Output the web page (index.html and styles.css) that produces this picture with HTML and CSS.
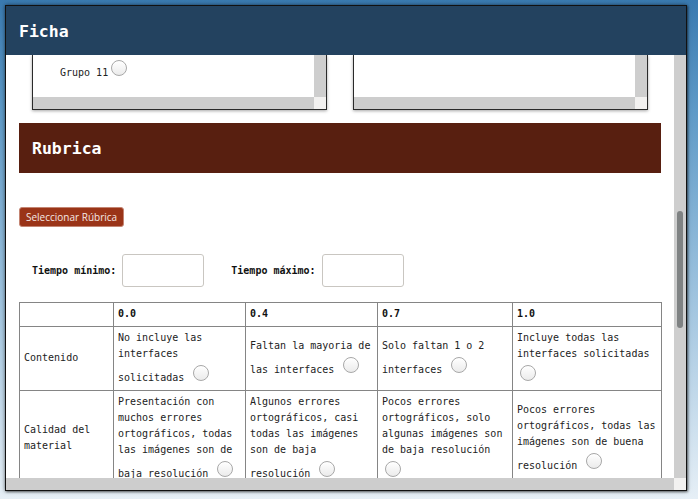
FILE: index.html
```html
<!DOCTYPE html>
<html lang="es">
<head>
<meta charset="utf-8">
<title>Ficha</title>
<link rel="stylesheet" href="styles.css">
</head>
<body>
<div class="window">
  <div class="titlebar"><h1 class="title">Ficha</h1></div>
  <div class="viewport">
    <div class="page">
      <div class="groups">
        <div class="listbox">
          <div class="listbox-body">
            <div class="listbox-content">
              <label class="group-item">Grupo 11<input type="radio" class="radio" name="grupo"></label>
            </div>
            <div class="vscroll-small"></div>
          </div>
          <div class="listbox-foot"><div class="hscroll-small"></div><div class="corner-small"></div></div>
        </div>
        <div class="listbox">
          <div class="listbox-body">
            <div class="listbox-content"></div>
            <div class="vscroll-small"></div>
          </div>
          <div class="listbox-foot"><div class="hscroll-small"></div><div class="corner-small"></div></div>
        </div>
      </div>

      <h2 class="section">Rubrica</h2>

      <button class="btn" type="button">Seleccionar Rúbrica</button>

      <div class="times">
        <label class="time-label">Tiempo mínimo:</label>
        <input class="time-input" type="text">
        <label class="time-label second">Tiempo máximo:</label>
        <input class="time-input" type="text">
      </div>

      <table class="rubric">
        <colgroup>
          <col class="c0"><col class="c1"><col class="c2"><col class="c3"><col class="c4">
        </colgroup>
        <thead>
          <tr><th></th><th>0.0</th><th>0.4</th><th>0.7</th><th>1.0</th></tr>
        </thead>
        <tbody>
          <tr>
            <td>Contenido</td>
            <td>No incluye las interfaces solicitadas <input type="radio" class="radio" name="c1"></td>
            <td>Faltan la mayoria de las interfaces <input type="radio" class="radio" name="c1"></td>
            <td>Solo faltan 1 o 2 interfaces <input type="radio" class="radio" name="c1"></td>
            <td>Incluye todas las interfaces solicitadas <input type="radio" class="radio" name="c1"></td>
          </tr>
          <tr>
            <td>Calidad del material</td>
            <td>Presentación con muchos errores ortográficos, todas las imágenes son de baja resolución <input type="radio" class="radio" name="c2"></td>
            <td>Algunos errores ortográficos, casi todas las imágenes son de baja resolución <input type="radio" class="radio" name="c2"></td>
            <td>Pocos errores ortográficos, solo algunas imágenes son de baja resolución <input type="radio" class="radio" name="c2"></td>
            <td>Pocos errores ortográficos, todas las imágenes son de buena resolución <input type="radio" class="radio" name="c2"></td>
          </tr>
        </tbody>
      </table>
    </div>
    <div class="vscroll"><div class="thumb"></div></div>
  </div>
  <div class="hbar"><div class="hscroll"></div><div class="corner"></div></div>
</div>
</body>
</html>
```

FILE: styles.css
```css
* { box-sizing: border-box; }

html, body {
  margin: 0;
  height: 100%;
}

body {
  background: linear-gradient(to bottom, #3a7ab0 0px, #5e9ac7 110px, #a0c4df 300px, #e6eff6 499px);
  font-family: "DejaVu Sans Mono", monospace;
  overflow: hidden;
}

.window {
  position: absolute;
  left: 5px;
  top: 5px;
  width: 682px;
  height: 486px;
  border: 1px solid #111;
  box-shadow: 0 0 4px rgba(0, 0, 0, 0.55), 1px 1px 2px rgba(0, 0, 0, 0.4);
  background: #fff;
  display: flex;
  flex-direction: column;
}

.titlebar {
  flex: none;
  height: 49px;
  background: #23425f;
  display: flex;
  align-items: center;
  padding: 2px 13px 0;
}

.title {
  margin: 0;
  color: #fff;
  font: bold 16.5px "DejaVu Sans Mono", monospace;
}

.viewport {
  flex: none;
  height: 423px;
  display: flex;
}

.page {
  flex: 1;
  min-width: 0;
  overflow: hidden;
  padding: 0 13px;
  display: flex;
  flex-direction: column;
  align-items: flex-start;
}

.page > * {
  flex-shrink: 0;
}

.vscroll {
  flex: none;
  width: 12px;
  background: #cecece;
  padding-top: 156px;
}

.thumb {
  margin: 0 3px;
  height: 117px;
  border-radius: 3px;
  background: #7f8283;
}

.hbar {
  flex: none;
  height: 12px;
  display: flex;
}

.hscroll {
  flex: 1;
  background: #cdcdcd;
}

.corner {
  width: 12px;
  background: #f2f1f0;
}

/* group list boxes */
.groups {
  align-self: stretch;
  display: flex;
  gap: 26px;
  padding: 0 13px;
}

.listbox {
  flex: 1;
  border: 1px solid #2a2a2a;
  border-top: none;
  box-shadow: 0 1px 3px rgba(0, 0, 0, 0.35);
  display: flex;
  flex-direction: column;
}

.listbox-body {
  height: 42px;
  display: flex;
}

.listbox-content {
  flex: 1;
  padding: 2px 0 0 27px;
  font-size: 10px;
  line-height: 16px;
  color: #222;
}

.vscroll-small {
  width: 12px;
  background: #cecece;
}

.listbox-foot {
  height: 12px;
  display: flex;
}

.hscroll-small {
  flex: 1;
  background: #cdcdcd;
}

.corner-small {
  width: 12px;
  background: #f2f1f0;
}

.radio {
  -webkit-appearance: none;
  appearance: none;
  width: 16px;
  height: 16px;
  margin: 3px 3px 0 3px;
  border: 1px solid #a8a8a8;
  border-radius: 50%;
  background: linear-gradient(#ffffff, #ebebeb);
  box-shadow: inset 0 1px 1px rgba(255, 255, 255, 0.9);
  vertical-align: baseline;
}

/* section header */
.section {
  align-self: stretch;
  margin: 13px 0 0;
  height: 50px;
  background: #581f10;
  color: #fff;
  font: bold 16.5px "DejaVu Sans Mono", monospace;
  padding: 1px 13px 0;
  display: flex;
  align-items: center;
}

.btn {
  margin-top: 34px;
  height: 20px;
  width: 105px;
  padding: 0 6px;
  background: #9a3418;
  border: 1px solid #c48573;
  border-radius: 3px;
  color: #f5e8e4;
  font: 10px "Open Sans", sans-serif;
  white-space: nowrap;
}

.times {
  margin-top: 27px;
  display: flex;
  align-items: center;
  padding-left: 13px;
}

.time-label {
  font: bold 10px "DejaVu Sans Mono", monospace;
  color: #111;
  margin-right: 6px;
}

.time-label.second {
  margin-left: 27px;
}

.time-input {
  width: 82px;
  height: 33px;
  border: 1px solid #c9c6c1;
  border-radius: 3px;
  background: #fff;
  margin: 0;
}

/* rubric table */
.rubric {
  margin-top: 15px;
  width: 642px;
  table-layout: fixed;
  border-collapse: collapse;
  font-size: 10px;
  line-height: 16px;
  color: #222;
}

.c0 { width: 94px; }
.c1 { width: 132px; }
.c2 { width: 132px; }
.c3 { width: 135px; }
.c4 { width: 149px; }

.rubric th,
.rubric td {
  border: 1px solid #858585;
  padding: 3px 4px 4px;
  vertical-align: middle;
  text-align: left;
}

.rubric th {
  font-weight: bold;
  color: #111;
}
```
